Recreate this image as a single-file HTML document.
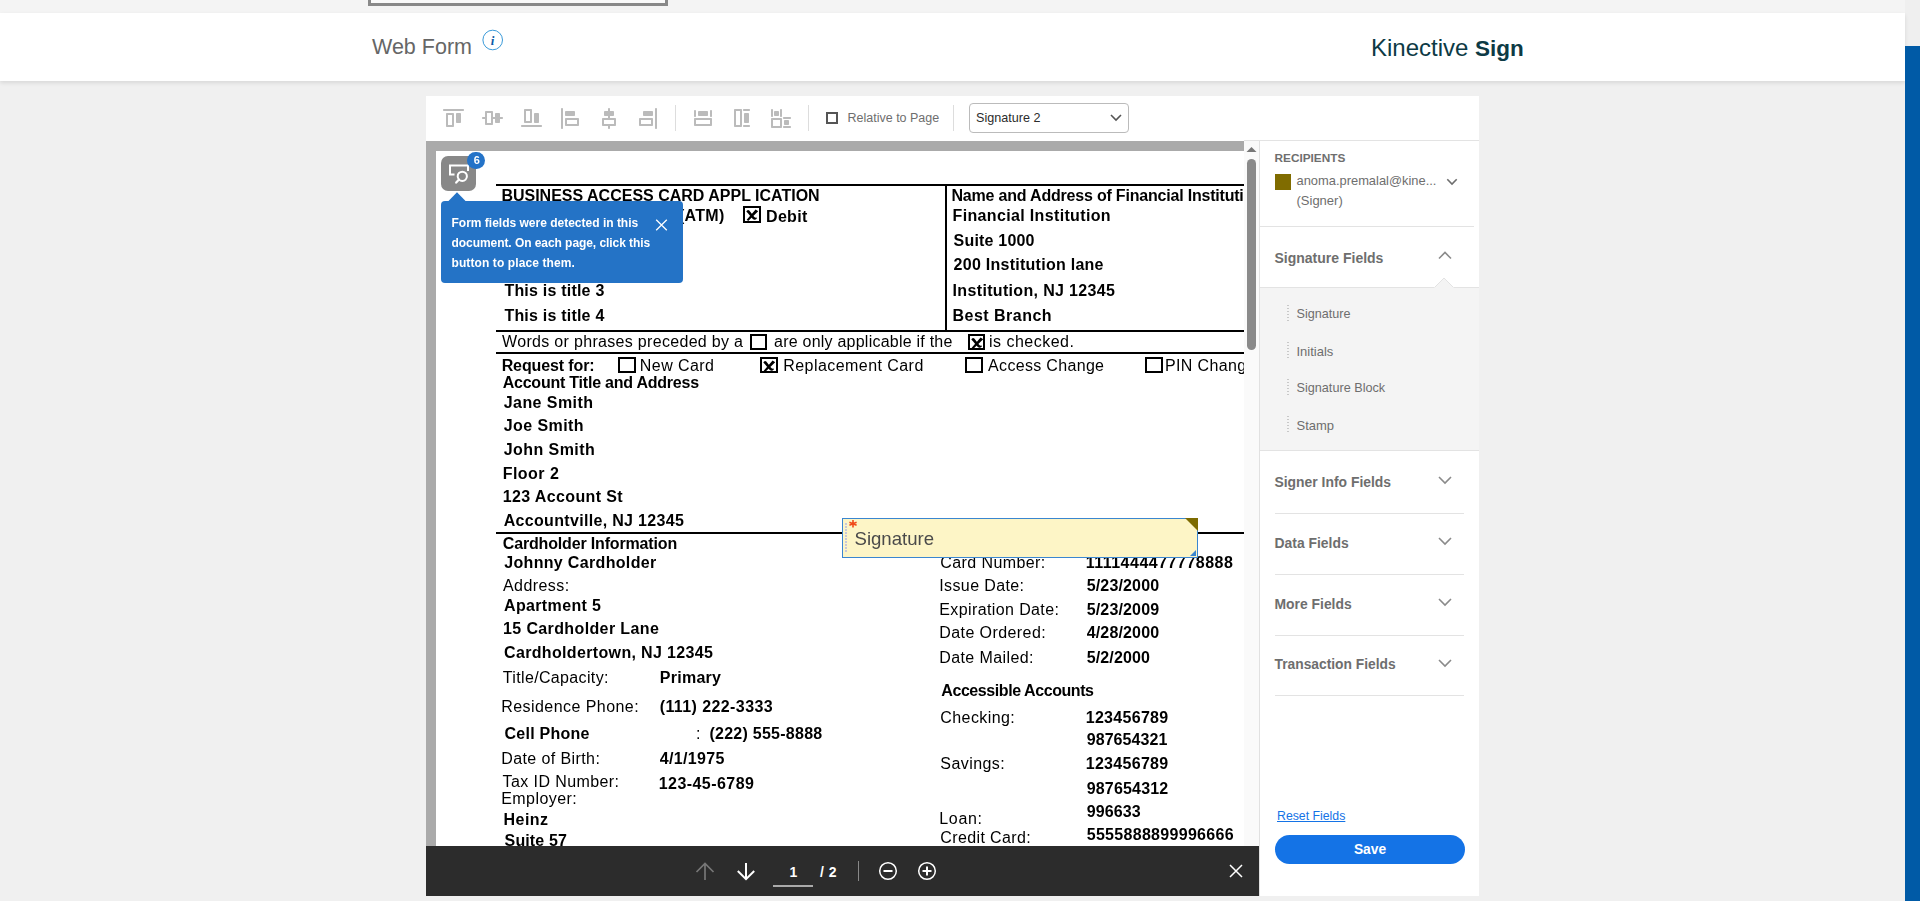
<!DOCTYPE html>
<html><head><meta charset="utf-8">
<style>
*{margin:0;padding:0;box-sizing:border-box}
html,body{width:1920px;height:901px;overflow:hidden;background:#f0f0f0;font-family:"Liberation Sans",sans-serif;position:relative}
.abs{position:absolute}
#topstrip{left:0;top:0;width:1905px;height:13px;background:#f4f4f4}
#topbox{left:368px;top:-4px;width:300px;height:10px;border:3px solid #898989;border-top:none;background:#fafafa}
#header{left:0;top:13px;width:1905px;height:68px;background:#fff;box-shadow:0 2px 4px rgba(0,0,0,0.10)}
#bluebar{left:1905px;top:46px;width:15px;height:855px;background:#005aa6}
#rightgap{left:1905px;top:0;width:15px;height:46px;background:#efefef}
.wf{left:372px;top:36.8px;font-size:21.5px;color:#666;white-space:nowrap;line-height:1}
.logo{left:1371px;top:36px;font-size:24px;color:#0d3a45;white-space:nowrap;line-height:1}
#panel{left:426px;top:96px;width:1053px;height:800px;background:#fff}
.ico{position:absolute;background:#bbb;border-radius:0.8px}
.ico.o{background:transparent;border:2px solid #bbb}
.div{position:absolute;width:1px;background:#ddd}
#frame{left:426px;top:141px;width:818px;height:705px;background:#aaa;overflow:hidden}
#page{left:10px;top:10px;width:900px;height:900px;background:#fff}
#docclip{left:436px;top:151px;width:808px;height:695px;overflow:hidden}
#docinner{left:-436px;top:-151px;width:1920px;height:901px;will-change:transform}
.t{position:absolute;white-space:nowrap;line-height:1;font-weight:700;color:#000;font-size:16px}
.hl{position:absolute;background:#000;height:2px}
.cb{position:absolute;border:2px solid #000;width:17.5px;height:16.5px;background:#fff}
#scroll{left:1244px;top:141px;width:15px;height:705px;background:#fafafa}
#rpanel{left:1259px;top:141px;width:220px;height:755px;background:#fff;border-left:1px solid #e1e1e1}
.rp{position:absolute;white-space:nowrap;line-height:1;color:#6e6e6e}
.sep{position:absolute;height:1px;background:#e3e3e3}
#btool{left:426px;top:846px;width:833px;height:50px;background:#2c2c2c}
</style></head><body>
<div id="topstrip" class="abs"></div>
<div id="topbox" class="abs"></div>
<div id="rightgap" class="abs"></div>
<div id="header" class="abs">
</div>
<div class="abs wf">Web Form</div>
<svg class="abs" style="left:481px;top:29px" width="23" height="23" viewBox="0 0 23 23">
  <circle cx="11.7" cy="11" r="9.8" fill="none" stroke="#3a9ad9" stroke-width="1"/>
  <text x="11.5" y="15.5" text-anchor="middle" font-family="Liberation Serif" font-style="italic" font-weight="700" font-size="13" fill="#0a5aa6">i</text>
</svg>
<div class="abs logo">Kinective <b style="font-size:22.5px">Sign</b></div>
<div id="bluebar" class="abs"></div>

<div id="panel" class="abs"></div>
<!-- toolbar icons -->
<div class="ico" style="left:443px;top:109px;width:21px;height:2px"></div>
<div class="ico o" style="left:446px;top:113px;width:8px;height:14px"></div>
<div class="ico" style="left:456px;top:113px;width:5px;height:10px"></div>

<div class="ico" style="left:482px;top:117px;width:21px;height:2px"></div>
<div class="ico o" style="left:485px;top:111px;width:8px;height:14px;background:#fff"></div>
<div class="ico" style="left:495px;top:113px;width:5px;height:10px"></div>

<div class="ico o" style="left:524px;top:109px;width:8px;height:14px"></div>
<div class="ico" style="left:534px;top:113px;width:5px;height:10px"></div>
<div class="ico" style="left:521px;top:125px;width:21px;height:2px"></div>

<div class="ico" style="left:561px;top:108px;width:2px;height:21px"></div>
<div class="ico" style="left:565px;top:111px;width:10px;height:5px"></div>
<div class="ico o" style="left:565px;top:118px;width:14px;height:8px"></div>

<div class="ico" style="left:608px;top:108px;width:2px;height:21px"></div>
<div class="ico" style="left:604px;top:111px;width:10px;height:5px"></div>
<div class="ico o" style="left:602px;top:118px;width:14px;height:8px;background:#fff"></div>

<div class="ico" style="left:655px;top:108px;width:2px;height:21px"></div>
<div class="ico" style="left:643px;top:111px;width:10px;height:5px"></div>
<div class="ico o" style="left:639px;top:118px;width:14px;height:8px"></div>

<div class="div" style="left:675px;top:105px;height:26px"></div>

<div class="ico" style="left:694px;top:110px;width:2px;height:6.5px"></div>
<div class="ico" style="left:710px;top:110px;width:2px;height:6.5px"></div>
<div class="ico" style="left:698px;top:111px;width:10px;height:4.5px"></div>
<div class="ico o" style="left:694px;top:118px;width:18px;height:8px"></div>

<div class="ico o" style="left:734px;top:109px;width:8px;height:18px"></div>
<div class="ico" style="left:743px;top:109px;width:7px;height:2px"></div>
<div class="ico" style="left:743px;top:125px;width:7px;height:2px"></div>
<div class="ico" style="left:744px;top:113px;width:5px;height:10px"></div>

<div class="ico" style="left:771px;top:109px;width:2px;height:7.5px"></div>
<div class="ico" style="left:780px;top:109px;width:2px;height:7.5px"></div>
<div class="ico" style="left:774px;top:111px;width:5px;height:5px"></div>
<div class="ico o" style="left:771px;top:118px;width:11px;height:10px"></div>
<div class="ico" style="left:783px;top:117px;width:8px;height:2px"></div>
<div class="ico" style="left:783px;top:126px;width:8px;height:2px"></div>
<div class="ico" style="left:784px;top:120px;width:5px;height:5px"></div>

<div class="div" style="left:808px;top:105px;height:26px"></div>
<div class="abs" style="left:826px;top:112px;width:12px;height:12px;border:2px solid #555"></div>
<div class="rp" style="left:847.5px;top:112.4px;font-size:12.5px">Relative to Page</div>
<div class="div" style="left:953px;top:105px;height:26px"></div>
<div class="abs" style="left:969px;top:103px;width:160px;height:30px;border:1px solid #bbb;border-radius:4px;background:#fff"></div>
<div class="rp" style="left:976px;top:112.3px;font-size:12.6px;color:#2c2c2c">Signature 2</div>
<svg class="abs" style="left:1109px;top:112px" width="14" height="12" viewBox="0 0 14 12"><path d="M2 3 L7 8 L12 3" fill="none" stroke="#555" stroke-width="1.6"/></svg>

<!-- viewer -->
<div id="frame" class="abs"><div id="page" class="abs"></div></div>
<div id="docclip" class="abs"><div id="docinner" class="abs">
<!-- lines -->
<div class="hl" style="left:496px;top:184px;width:800px"></div>
<div class="hl" style="left:945px;top:184px;width:2px;height:148px"></div>
<div class="hl" style="left:496px;top:330px;width:800px"></div>
<div class="hl" style="left:496px;top:352px;width:800px"></div>
<div class="hl" style="left:496px;top:532px;width:800px"></div>
<div class="t" style="left:501.40px;top:187.76px;font-size:16px;">BUSINESS ACCESS CARD APPL ICATION</div>
<div class="t" style="left:626.23px;top:208.16px;font-size:16px;letter-spacing:0.300px;">Credit (ATM)</div>
<div class="t" style="left:766.00px;top:208.56px;font-size:16px;letter-spacing:0.332px;">Debit</div>
<div class="t" style="left:504.40px;top:233.16px;font-size:16px;letter-spacing:0.213px;">This is title 1</div>
<div class="t" style="left:504.40px;top:258.16px;font-size:16px;letter-spacing:0.213px;">This is title 2</div>
<div class="t" style="left:504.40px;top:283.16px;font-size:16px;letter-spacing:0.213px;">This is title 3</div>
<div class="t" style="left:504.40px;top:308.16px;font-size:16px;letter-spacing:0.213px;">This is title 4</div>
<div class="t" style="left:502.10px;top:334.16px;font-size:16px;font-weight:400;letter-spacing:0.313px;">Words or phrases preceded by a</div>
<div class="t" style="left:774.00px;top:334.16px;font-size:16px;font-weight:400;letter-spacing:0.234px;">are only applicable if the</div>
<div class="t" style="left:989.00px;top:334.16px;font-size:16px;font-weight:400;letter-spacing:0.481px;">is checked.</div>
<div class="t" style="left:951.50px;top:187.76px;font-size:16px;letter-spacing:-0.200px;">Name and Address of Financial Institution</div>
<div class="t" style="left:952.60px;top:207.96px;font-size:16px;letter-spacing:0.343px;">Financial Institution</div>
<div class="t" style="left:953.60px;top:232.56px;font-size:16px;letter-spacing:0.194px;">Suite 1000</div>
<div class="t" style="left:953.60px;top:257.16px;font-size:16px;letter-spacing:0.262px;">200 Institution lane</div>
<div class="t" style="left:952.60px;top:282.56px;font-size:16px;letter-spacing:0.335px;">Institution, NJ 12345</div>
<div class="t" style="left:952.60px;top:307.76px;font-size:16px;letter-spacing:0.472px;">Best Branch</div>
<div class="t" style="left:501.70px;top:357.86px;font-size:16px;letter-spacing:-0.118px;">Request for:</div>
<div class="t" style="left:639.80px;top:357.86px;font-size:16px;font-weight:400;letter-spacing:0.438px;">New Card</div>
<div class="t" style="left:783.20px;top:357.86px;font-size:16px;font-weight:400;letter-spacing:0.447px;">Replacement Card</div>
<div class="t" style="left:988.10px;top:357.86px;font-size:16px;font-weight:400;letter-spacing:0.320px;">Access Change</div>
<div class="t" style="left:1165.00px;top:357.86px;font-size:16px;font-weight:400;letter-spacing:0.350px;">PIN Change</div>
<div class="t" style="left:502.70px;top:374.66px;font-size:16px;letter-spacing:-0.225px;">Account Title and Address</div>
<div class="t" style="left:503.70px;top:394.56px;font-size:16px;letter-spacing:0.446px;">Jane Smith</div>
<div class="t" style="left:503.70px;top:418.36px;font-size:16px;letter-spacing:0.427px;">Joe Smith</div>
<div class="t" style="left:503.70px;top:441.96px;font-size:16px;letter-spacing:0.440px;">John Smith</div>
<div class="t" style="left:502.70px;top:465.76px;font-size:16px;letter-spacing:0.477px;">Floor 2</div>
<div class="t" style="left:502.70px;top:489.46px;font-size:16px;letter-spacing:0.380px;">123 Account St</div>
<div class="t" style="left:503.70px;top:513.16px;font-size:16px;letter-spacing:0.323px;">Accountville, NJ 12345</div>
<div class="t" style="left:502.80px;top:536.06px;font-size:16px;letter-spacing:-0.162px;">Cardholder Information</div>
<div class="t" style="left:504.20px;top:554.86px;font-size:16px;letter-spacing:0.334px;">Johnny Cardholder</div>
<div class="t" style="left:503.00px;top:577.56px;font-size:16px;font-weight:400;letter-spacing:0.429px;">Address:</div>
<div class="t" style="left:504.00px;top:597.96px;font-size:16px;letter-spacing:0.355px;">Apartment 5</div>
<div class="t" style="left:503.00px;top:621.46px;font-size:16px;letter-spacing:0.378px;">15 Cardholder Lane</div>
<div class="t" style="left:504.00px;top:645.46px;font-size:16px;letter-spacing:0.346px;">Cardholdertown, NJ 12345</div>
<div class="t" style="left:502.80px;top:669.96px;font-size:16px;font-weight:400;letter-spacing:0.348px;">Title/Capacity:</div>
<div class="t" style="left:659.80px;top:669.96px;font-size:16px;letter-spacing:0.267px;">Primary</div>
<div class="t" style="left:501.20px;top:698.76px;font-size:16px;font-weight:400;letter-spacing:0.446px;">Residence Phone:</div>
<div class="t" style="left:659.70px;top:698.76px;font-size:16px;letter-spacing:0.412px;">(111) 222-3333</div>
<div class="t" style="left:504.60px;top:725.56px;font-size:16px;letter-spacing:0.224px;">Cell Phone</div>
<div class="t" style="left:696.00px;top:725.56px;font-size:16px;font-weight:400;">:</div>
<div class="t" style="left:709.40px;top:725.56px;font-size:16px;letter-spacing:0.260px;">(222) 555-8888</div>
<div class="t" style="left:501.20px;top:750.66px;font-size:16px;font-weight:400;letter-spacing:0.405px;">Date of Birth:</div>
<div class="t" style="left:659.70px;top:750.66px;font-size:16px;letter-spacing:0.331px;">4/1/1975</div>
<div class="t" style="left:502.60px;top:773.76px;font-size:16px;font-weight:400;letter-spacing:0.408px;">Tax ID Number:</div>
<div class="t" style="left:658.70px;top:775.56px;font-size:16px;letter-spacing:0.446px;">123-45-6789</div>
<div class="t" style="left:501.20px;top:790.56px;font-size:16px;font-weight:400;letter-spacing:0.440px;">Employer:</div>
<div class="t" style="left:503.60px;top:811.76px;font-size:16px;letter-spacing:0.457px;">Heinz</div>
<div class="t" style="left:504.60px;top:832.76px;font-size:16px;letter-spacing:0.120px;">Suite 57</div>
<div class="t" style="left:940.30px;top:554.66px;font-size:16px;font-weight:400;letter-spacing:0.406px;">Card Number:</div>
<div class="t" style="left:1085.70px;top:554.66px;font-size:16px;letter-spacing:0.498px;">1111444477778888</div>
<div class="t" style="left:939.30px;top:577.66px;font-size:16px;font-weight:400;letter-spacing:0.372px;">Issue Date:</div>
<div class="t" style="left:1086.70px;top:577.66px;font-size:16px;letter-spacing:0.152px;">5/23/2000</div>
<div class="t" style="left:939.30px;top:601.66px;font-size:16px;font-weight:400;letter-spacing:0.387px;">Expiration Date:</div>
<div class="t" style="left:1086.70px;top:601.66px;font-size:16px;letter-spacing:0.152px;">5/23/2009</div>
<div class="t" style="left:939.30px;top:625.46px;font-size:16px;font-weight:400;letter-spacing:0.414px;">Date Ordered:</div>
<div class="t" style="left:1086.70px;top:625.46px;font-size:16px;letter-spacing:0.152px;">4/28/2000</div>
<div class="t" style="left:939.30px;top:649.66px;font-size:16px;font-weight:400;letter-spacing:0.393px;">Date Mailed:</div>
<div class="t" style="left:1086.70px;top:649.66px;font-size:16px;letter-spacing:0.131px;">5/2/2000</div>
<div class="t" style="left:941.30px;top:683.46px;font-size:16px;letter-spacing:-0.425px;">Accessible Accounts</div>
<div class="t" style="left:940.30px;top:709.66px;font-size:16px;font-weight:400;letter-spacing:0.412px;">Checking:</div>
<div class="t" style="left:1085.70px;top:709.66px;font-size:16px;letter-spacing:0.302px;">123456789</div>
<div class="t" style="left:1086.70px;top:732.46px;font-size:16px;letter-spacing:0.077px;">987654321</div>
<div class="t" style="left:940.30px;top:756.36px;font-size:16px;font-weight:400;letter-spacing:0.440px;">Savings:</div>
<div class="t" style="left:1085.70px;top:756.36px;font-size:16px;letter-spacing:0.302px;">123456789</div>
<div class="t" style="left:1086.70px;top:780.86px;font-size:16px;letter-spacing:0.177px;">987654312</div>
<div class="t" style="left:1086.70px;top:803.86px;font-size:16px;letter-spacing:0.122px;">996633</div>
<div class="t" style="left:939.30px;top:810.86px;font-size:16px;font-weight:400;letter-spacing:0.677px;">Loan:</div>
<div class="t" style="left:940.30px;top:830.46px;font-size:16px;font-weight:400;letter-spacing:0.372px;">Credit Card:</div>
<div class="t" style="left:1086.70px;top:827.16px;font-size:16px;letter-spacing:0.302px;">5555888899996666</div>
<!-- checkboxes -->
<div class="cb" style="left:743px;top:206px"></div>
<div class="cb" style="left:749.5px;top:333.5px"></div>
<div class="cb" style="left:967.5px;top:333.5px"></div>
<div class="cb" style="left:618px;top:356.5px"></div>
<div class="cb" style="left:760px;top:356.5px"></div>
<div class="cb" style="left:965px;top:356.5px"></div>
<div class="cb" style="left:1145px;top:356.5px"></div>
<svg class="abs" style="left:743px;top:206px" width="18" height="17" viewBox="0 0 18 17"><path d="M12.6 3.4 L15.2 5.3 L5.2 15.0 L3.7 13.8 Z M3.3 5.6 Q4.2 3.3 6.3 4.4 L10.9 10.5 Q12.2 12.1 13.9 11.6 L13.8 12.5 Q11.9 14.7 9.8 13.0 L6.6 9.3 Q5.0 7.0 3.3 5.6 Z" fill="#000"/></svg>
<svg class="abs" style="left:967.5px;top:333.5px" width="18" height="17" viewBox="0 0 18 17"><path d="M12.6 3.4 L15.2 5.3 L5.2 15.0 L3.7 13.8 Z M3.3 5.6 Q4.2 3.3 6.3 4.4 L10.9 10.5 Q12.2 12.1 13.9 11.6 L13.8 12.5 Q11.9 14.7 9.8 13.0 L6.6 9.3 Q5.0 7.0 3.3 5.6 Z" fill="#000"/></svg>
<svg class="abs" style="left:760px;top:356.5px" width="18" height="17" viewBox="0 0 18 17"><path d="M12.6 3.4 L15.2 5.3 L5.2 15.0 L3.7 13.8 Z M3.3 5.6 Q4.2 3.3 6.3 4.4 L10.9 10.5 Q12.2 12.1 13.9 11.6 L13.8 12.5 Q11.9 14.7 9.8 13.0 L6.6 9.3 Q5.0 7.0 3.3 5.6 Z" fill="#000"/></svg>

<!-- form fields button -->
<div class="abs" style="left:441px;top:156px;width:35px;height:35px;border-radius:7px;background:#888"></div>
<svg class="abs" style="left:441px;top:156px" width="35" height="35" viewBox="0 0 35 35">
  <path d="M13.5 18.5 H9 V9.5 H27 V15" fill="none" stroke="#fff" stroke-width="2"/>
  <circle cx="21.3" cy="20.3" r="4.6" fill="none" stroke="#fff" stroke-width="2"/>
  <path d="M18 23.6 L15.2 26.6" fill="none" stroke="#fff" stroke-width="2.2" stroke-linecap="round"/>
</svg>
<div class="abs" style="left:467px;top:151.5px;width:17.5px;height:17.5px;border-radius:50%;background:#2473c8"></div>
<div class="abs" style="left:468px;top:155px;width:17.5px;text-align:center;font-size:11px;font-weight:700;color:#fff;line-height:1">6</div>
<!-- tooltip -->
<svg class="abs" style="left:447px;top:191px" width="20" height="11" viewBox="0 0 20 11"><path d="M1 10.5 L10 1.3 L19 10.5 Z" fill="#2473c6"/></svg>
<div class="abs" style="left:441px;top:201px;width:242px;height:82px;background:#2473c6;border-radius:4px"></div>
<div class="abs" style="left:451.5px;top:212.8px;font-size:12px;font-weight:700;color:#fff;line-height:20px;white-space:nowrap">Form fields were detected in this<br><span style="letter-spacing:-0.06px">document. On each page, click this</span><br><span style="letter-spacing:0.1px">button to place them.</span></div>
<svg class="abs" style="left:655px;top:219px" width="13" height="12" viewBox="0 0 13 12"><path d="M1.2 0.8 L11.8 11.2 M11.8 0.8 L1.2 11.2" stroke="#fff" stroke-width="1.3"/></svg>

<!-- signature field -->
<div class="abs" style="left:842px;top:518px;width:356px;height:40px;background:#fdf5c6;border:1px solid #3a86d0"></div>
<div class="abs" style="left:845px;top:523px;width:2px;height:29px;background:repeating-linear-gradient(to bottom,#c8c8d8 0,#c8c8d8 2px,transparent 2px,transparent 3px)"></div>
<svg class="abs" style="left:848px;top:519px" width="10" height="10" viewBox="0 0 10 10"><path d="M5 1 V8.5 M1.4 3.3 L8.6 6.2 M8.6 3.3 L1.4 6.2" stroke="#f04a1a" stroke-width="1.6"/></svg>
<div class="abs" style="left:854.5px;top:530.3px;font-size:18.6px;color:#4a4a4a;line-height:1;white-space:nowrap">Signature</div>
<svg class="abs" style="left:1185px;top:518px" width="13" height="13" viewBox="0 0 13 13"><path d="M0 0 H13 V13 Z" fill="#7d6b00"/></svg>
<svg class="abs" style="left:1189px;top:549px" width="8" height="8" viewBox="0 0 8 8"><path d="M7 1 V7 H1 Z" fill="#3a86d0"/></svg>
</div></div>

<div id="scroll" class="abs"></div>
<svg class="abs" style="left:1246px;top:146px" width="11" height="7" viewBox="0 0 11 7"><path d="M0.5 6 L5.5 1 L10.5 6 Z" fill="#777"/></svg>
<div class="abs" style="left:1247px;top:159px;width:9px;height:191px;border-radius:4.5px;background:#8a8a8a"></div>

<!-- right panel -->
<div id="rpanel" class="abs"></div>
<div class="abs" style="left:1244px;top:140px;width:235px;height:1px;background:#e3e3e3"></div>
<div class="rp" style="left:1274.5px;top:152.7px;font-size:11.8px;font-weight:700">RECIPIENTS</div>
<div class="abs" style="left:1275px;top:174px;width:16px;height:16px;background:#806c00"></div>
<div class="rp" style="left:1296.5px;top:174.9px;font-size:12.9px">anoma.premalal@kine...</div>
<div class="rp" style="left:1296.5px;top:194.4px;font-size:13px">(Signer)</div>
<svg class="abs" style="left:1446px;top:177px" width="12" height="10" viewBox="0 0 12 10"><path d="M1.3 2.3 L6 7 L10.7 2.3" fill="none" stroke="#6e6e6e" stroke-width="1.6"/></svg>
<div class="sep" style="left:1260px;top:226px;width:214px"></div>
<div class="rp" style="left:1274.5px;top:250.75px;font-size:14px;font-weight:700">Signature Fields</div>
<svg class="abs" style="left:1437px;top:249px" width="16" height="12" viewBox="0 0 16 12"><path d="M2 9.5 L8 3.5 L14 9.5" fill="none" stroke="#8a8a8a" stroke-width="1.6"/></svg>
<div class="abs" style="left:1260px;top:287px;width:219px;height:164px;background:#f4f4f4;border-top:1px solid #e3e3e3;border-bottom:1px solid #e3e3e3"></div>
<svg class="abs" style="left:1434px;top:277px" width="20" height="12" viewBox="0 0 20 12"><path d="M0 11 L10 1 L20 11" fill="#f4f4f4" stroke="#e3e3e3" stroke-width="1"/><rect x="0" y="10.5" width="20" height="2" fill="#f4f4f4"/></svg>
<div class="abs" style="left:1287px;top:305px;width:1.5px;height:17px;background:repeating-linear-gradient(to bottom,#c8c8c8 0,#c8c8c8 1.5px,transparent 1.5px,transparent 3px)"></div>
<div class="abs" style="left:1287px;top:342px;width:1.5px;height:17px;background:repeating-linear-gradient(to bottom,#c8c8c8 0,#c8c8c8 1.5px,transparent 1.5px,transparent 3px)"></div>
<div class="abs" style="left:1287px;top:379px;width:1.5px;height:17px;background:repeating-linear-gradient(to bottom,#c8c8c8 0,#c8c8c8 1.5px,transparent 1.5px,transparent 3px)"></div>
<div class="abs" style="left:1287px;top:416px;width:1.5px;height:17px;background:repeating-linear-gradient(to bottom,#c8c8c8 0,#c8c8c8 1.5px,transparent 1.5px,transparent 3px)"></div>
<div class="rp" style="left:1296.5px;top:308px;font-size:12.6px">Signature</div>
<div class="rp" style="left:1296.5px;top:344.7px;font-size:13px">Initials</div>
<div class="rp" style="left:1296.5px;top:381.8px;font-size:12.66px">Signature Block</div>
<div class="rp" style="left:1296.5px;top:418.6px;font-size:13px">Stamp</div>

<div class="rp" style="left:1274.5px;top:475.7px;font-size:13.9px;font-weight:700">Signer Info Fields</div>
<svg class="abs" style="left:1437px;top:474px" width="16" height="12" viewBox="0 0 16 12"><path d="M2 3 L8 9 L14 3" fill="none" stroke="#8a8a8a" stroke-width="1.6"/></svg>
<div class="sep" style="left:1275px;top:513px;width:189px"></div>
<div class="rp" style="left:1274.5px;top:536.7px;font-size:13.9px;font-weight:700">Data Fields</div>
<svg class="abs" style="left:1437px;top:535px" width="16" height="12" viewBox="0 0 16 12"><path d="M2 3 L8 9 L14 3" fill="none" stroke="#8a8a8a" stroke-width="1.6"/></svg>
<div class="sep" style="left:1275px;top:574px;width:189px"></div>
<div class="rp" style="left:1274.5px;top:598.2px;font-size:13.9px;font-weight:700">More Fields</div>
<svg class="abs" style="left:1437px;top:596px" width="16" height="12" viewBox="0 0 16 12"><path d="M2 3 L8 9 L14 3" fill="none" stroke="#8a8a8a" stroke-width="1.6"/></svg>
<div class="sep" style="left:1275px;top:635px;width:189px"></div>
<div class="rp" style="left:1274.5px;top:658.3px;font-size:13.8px;font-weight:700">Transaction Fields</div>
<svg class="abs" style="left:1437px;top:657px" width="16" height="12" viewBox="0 0 16 12"><path d="M2 3 L8 9 L14 3" fill="none" stroke="#8a8a8a" stroke-width="1.6"/></svg>
<div class="sep" style="left:1275px;top:695px;width:189px"></div>

<div class="rp" style="left:1277px;top:809.6px;font-size:12.3px;color:#1473e6;text-decoration:underline">Reset Fields</div>
<div class="abs" style="left:1275px;top:835px;width:190px;height:29px;border-radius:14.5px;background:#1473e6"></div>
<div class="abs" style="left:1275px;top:843.3px;width:190px;text-align:center;font-size:13.8px;font-weight:700;color:#fff;line-height:1">Save</div>

<!-- bottom toolbar -->
<div id="btool" class="abs"></div>
<svg class="abs" style="left:694px;top:861px" width="22" height="21" viewBox="0 0 22 21"><path d="M11 19 V3 M2.5 11 L11 2.5 L19.5 11" fill="none" stroke="#777" stroke-width="1.7"/></svg>
<svg class="abs" style="left:735px;top:861px" width="22" height="21" viewBox="0 0 22 21"><path d="M11 2 V18 M2.8 10 L11 18.2 L19.2 10" fill="none" stroke="#fff" stroke-width="2"/></svg>
<div class="abs" style="left:773px;top:885px;width:40px;height:1.5px;background:#aaa"></div>
<div class="abs" style="left:789.5px;top:864.5px;font-size:14px;font-weight:700;color:#fff;line-height:1">1</div>
<div class="abs" style="left:820px;top:864.5px;font-size:14px;font-weight:700;color:#fff;line-height:1;letter-spacing:0.5px">/ 2</div>
<div class="abs" style="left:858px;top:861px;width:1px;height:20px;background:#888"></div>
<svg class="abs" style="left:878px;top:861px" width="20" height="20" viewBox="0 0 20 20"><circle cx="10" cy="10" r="8.3" fill="none" stroke="#fff" stroke-width="1.5"/><path d="M5.5 10 H14.5" stroke="#fff" stroke-width="2"/></svg>
<svg class="abs" style="left:917px;top:861px" width="20" height="20" viewBox="0 0 20 20"><circle cx="10" cy="10" r="8.3" fill="none" stroke="#fff" stroke-width="1.5"/><path d="M5.5 10 H14.5 M10 5.5 V14.5" stroke="#fff" stroke-width="2"/></svg>
<svg class="abs" style="left:1229px;top:864px" width="14" height="14" viewBox="0 0 14 14"><path d="M1 1 L13 13 M13 1 L1 13" stroke="#fff" stroke-width="1.5"/></svg>
</body></html>
